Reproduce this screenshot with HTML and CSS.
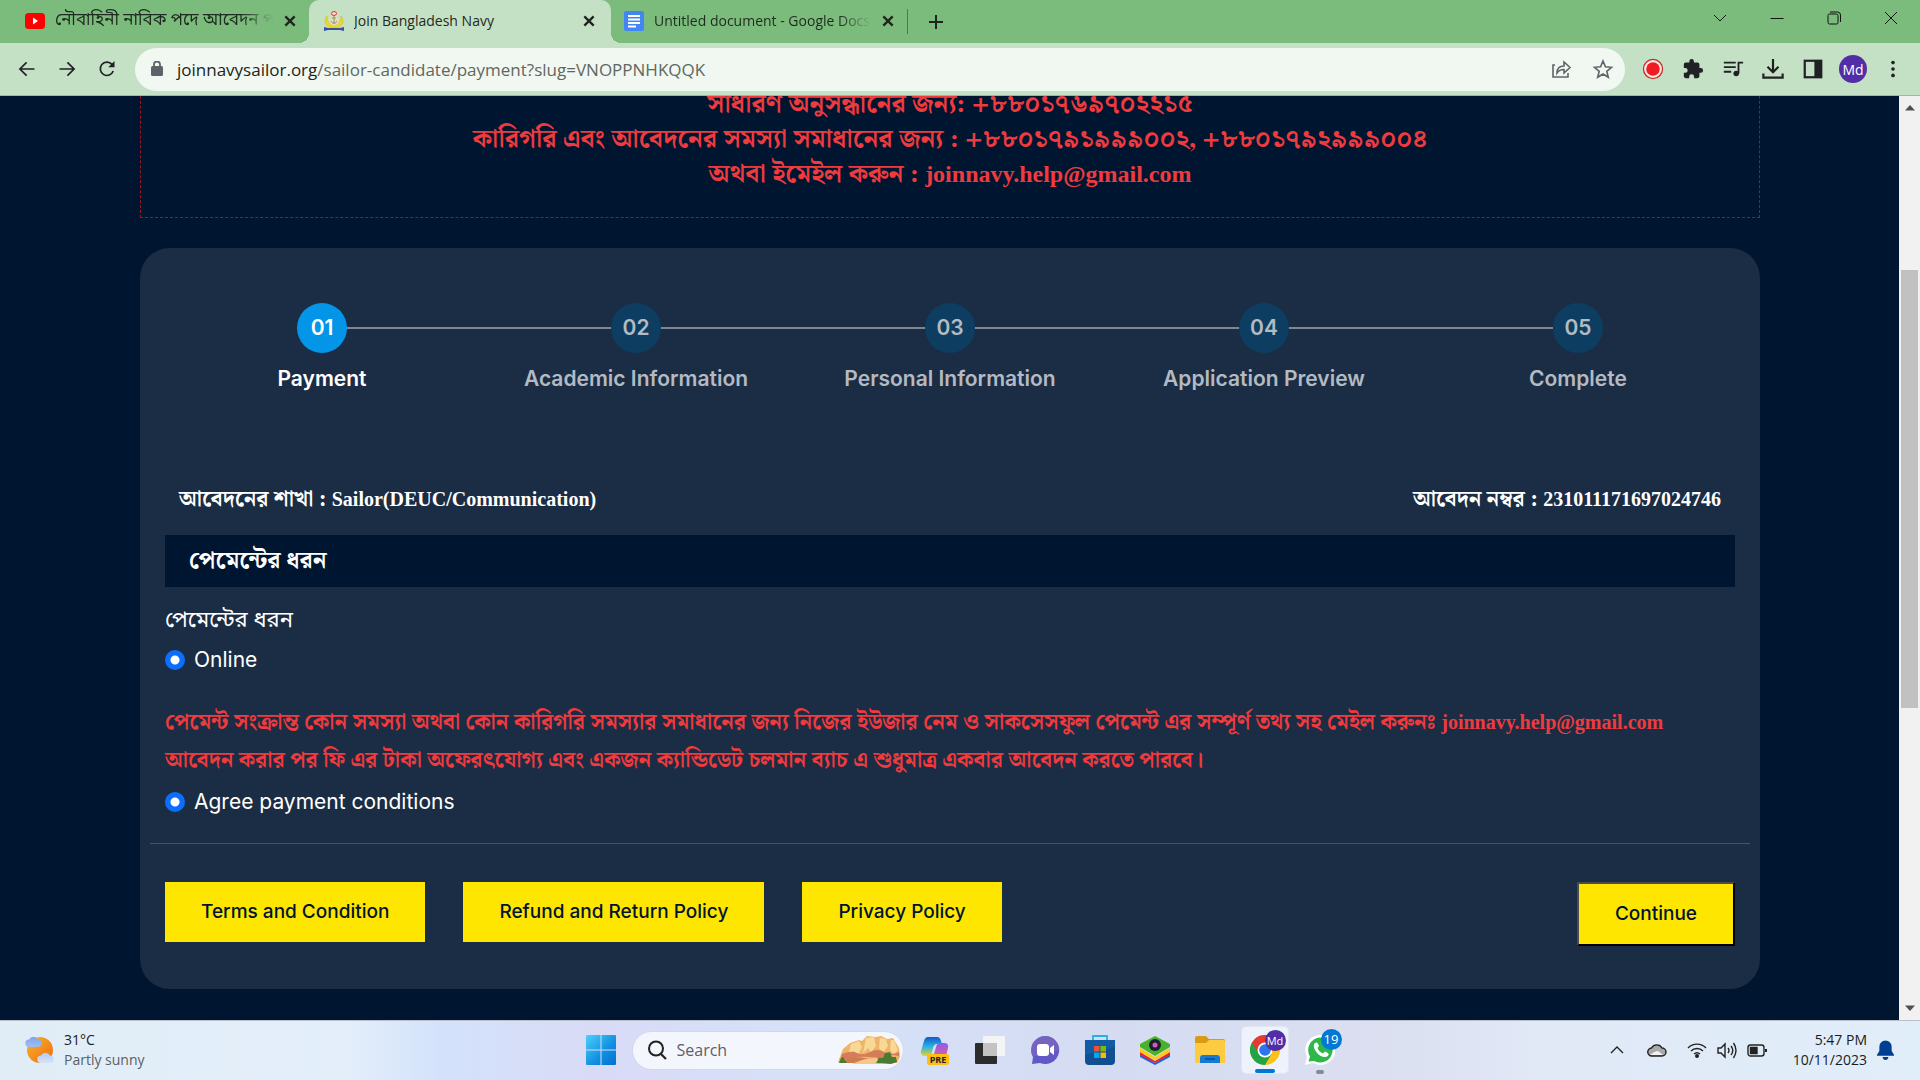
FILE: index.html
```
<!DOCTYPE html>
<html lang="bn">
<head>
<meta charset="utf-8">
<title>Join Bangladesh Navy</title>
<link rel="stylesheet" href="styles.css">
</head>
<body>
<div class="desktop">
  <header class="tabbar">
    <div class="tab">
      <svg class="favicon" viewBox="0 0 20 20"><rect y="2" width="20" height="16" rx="3.500" fill="#f00"/><path d="M8 6.500v7l5-3.500z" fill="#fff"/></svg>
      <span class="tab-title tab-title-bn">নৌবাহিনী নাবিক পদে আবেদন পদ্ধতি</span>
      <button class="tab-close" aria-label="Close tab"><svg viewBox="0 0 12 12"><path d="M2 2l8 8M10 2l-8 8"/></svg></button>
    </div>
    <div class="tab tab-active">
      <svg class="favicon" viewBox="0 0 20 20"><path d="M3 5c-4 5-2 11 7 12 9-1 11-7 7-12 0 5-2 9-7 9s-7-4-7-9z" fill="#ecdc1f" stroke="#c9b51c" stroke-width=".5"/><circle cx="10" cy="9.500" r="5" fill="#e3dfbd"/><path d="M10 5v8M7 10c1 3 5 3 6 0M8 7h4" stroke="#9a9070" fill="none"/><ellipse cx="10" cy="2.500" rx="2.500" ry="2" fill="#f6d9d4" stroke="#e03a2e"/><path d="M0 16l4 1h12l4-1v4l-4-1H4l-4 1z" fill="#3a4fa0"/></svg>
      <span class="tab-title">Join Bangladesh Navy</span>
      <button class="tab-close" aria-label="Close tab"><svg viewBox="0 0 12 12"><path d="M2 2l8 8M10 2l-8 8"/></svg></button>
    </div>
    <div class="tab">
      <svg class="favicon" viewBox="0 0 20 20"><rect width="20" height="20" rx="2" fill="#4285f4"/><path d="M4 5h12M4 8.500h12M4 12h12M4 15.500h8" stroke="#fff" stroke-width="1.800"/></svg>
      <span class="tab-title">Untitled document - Google Docs</span>
      <button class="tab-close" aria-label="Close tab"><svg viewBox="0 0 12 12"><path d="M2 2l8 8M10 2l-8 8"/></svg></button>
    </div>
    <span class="tab-divider"></span>
    <button class="new-tab" aria-label="New tab"><svg viewBox="0 0 16 16"><path d="M8 1v14M1 8h14"/></svg></button>
    <div class="window-buttons">
      <button aria-label="Search tabs"><svg viewBox="0 0 14 14"><path d="M1 4l6 6 6-6"/></svg></button>
      <button aria-label="Minimize"><svg viewBox="0 0 14 14"><path d="M.5 7.500h13"/></svg></button>
      <button aria-label="Restore"><svg viewBox="0 0 14 14"><rect x="1" y="3" width="10" height="10" rx="1.500"/><path d="M3 1h7.500a3 3 0 0 1 3 3v7"/></svg></button>
      <button aria-label="Close"><svg viewBox="0 0 14 14"><path d="M1 1l12 12M13 1L1 13"/></svg></button>
    </div>
  </header>

  <div class="toolbar">
    <div class="nav">
      <button aria-label="Back"><svg viewBox="0 0 24 24"><path d="M21 12H4M11.500 4l-8 8 8 8"/></svg></button>
      <button aria-label="Forward"><svg viewBox="0 0 24 24"><path d="M3 12h17M12.500 4l8 8-8 8"/></svg></button>
      <button aria-label="Reload"><svg viewBox="0 0 24 24"><path d="M19.500 14.500A8 8 0 1 1 18 6.500l2 2.500"/><path d="M21 2.500V10h-7.500z" class="fill"/></svg></button>
    </div>
    <div class="omnibox">
      <svg class="lock" viewBox="0 0 12 16"><rect y="5" width="12" height="10" rx="1.500" fill="#5f6368"/><path d="M3 6V3.500a3 3 0 0 1 6 0V6" fill="none" stroke="#5f6368" stroke-width="1.800"/></svg>
      <span class="url"><span class="host">joinnavysailor.org</span>/sailor-candidate/payment?slug=VNOPPNHKQQK</span>
      <button aria-label="Share"><svg viewBox="0 0 22 20"><path d="M4 6H2v12h15v-4M6 14c0-5 3-7 7-7V3l6 5.500-6 5.500v-3.500c-3 0-5 .5-7 3.500z"/></svg></button>
      <button aria-label="Bookmark"><svg viewBox="0 0 22 20"><path d="M11 2l2.400 5.800 6.100.5-4.700 4 1.500 6-5.300-3.300L5.700 18.300l1.500-6-4.700-4 6.100-.5z"/></svg></button>
    </div>
    <div class="extensions">
      <button aria-label="Recorder"><svg viewBox="0 0 24 24"><circle cx="12" cy="12" r="10.400" fill="#fbe9e0" stroke="#c8292b" stroke-width="1.400"/><circle cx="12" cy="12" r="7.400" fill="#f21b22"/></svg></button>
      <button aria-label="Extensions"><svg viewBox="0 0 24 24"><path fill="#202124" d="M20.500 11H19V7a2 2 0 0 0-2-2h-4V3.500a2.500 2.500 0 0 0-5 0V5H4a2 2 0 0 0-2 2v3.800h1.500a2.700 2.700 0 0 1 0 5.400H2V20a2 2 0 0 0 2 2h3.800v-1.500a2.700 2.700 0 0 1 5.400 0V22H17a2 2 0 0 0 2-2v-4h1.500a2.500 2.500 0 0 0 0-5z"/></svg></button>
      <button aria-label="Media"><svg viewBox="0 0 24 24" fill="none" stroke="#202124" stroke-width="2"><path d="M2 5h13M2 10h13M2 15h8M18 17V5h5"/><circle cx="15.500" cy="17" r="3" fill="#202124" stroke="none"/></svg></button>
      <button aria-label="Downloads"><svg viewBox="0 0 24 24" fill="none" stroke="#202124" stroke-width="2.400"><path d="M12 1v14M6 9.500l6 6 6-6M1.500 17v4.500h21V17"/></svg></button>
      <button aria-label="Side panel"><svg viewBox="0 0 24 24"><rect x="3" y="3" width="18" height="18" fill="none" stroke="#202124" stroke-width="2.400"/><path d="M13.500 3H21v18h-7.500z" fill="#202124"/></svg></button>
      <button class="avatar" aria-label="Profile"><span>Md</span></button>
      <button aria-label="Menu"><svg viewBox="0 0 24 24" fill="#202124"><circle cx="12" cy="5" r="2"/><circle cx="12" cy="12" r="2"/><circle cx="12" cy="19" r="2"/></svg></button>
    </div>
  </div>

  <div class="viewport">
    <main class="page">
      <section class="notice">
        <p>সাধারণ অনুসন্ধানের জন্য: +৮৮০১৭৬৯৭০২২১৫</p>
        <p>কারিগরি এবং আবেদনের সমস্যা সমাধানের জন্য : +৮৮০১৭৯১৯৯৯০০২, +৮৮০১৭৯২৯৯৯০০৪</p>
        <p>অথবা ইমেইল করুন : <span class="latin-lg">joinnavy.help@gmail.com</span></p>
      </section>

      <form class="card">
        <ol class="steps">
          <li class="step step-current"><span class="dot">01</span>Payment</li>
          <li class="step"><span class="dot">02</span>Academic Information</li>
          <li class="step"><span class="dot">03</span>Personal Information</li>
          <li class="step"><span class="dot">04</span>Application Preview</li>
          <li class="step"><span class="dot">05</span>Complete</li>
        </ol>
        <div class="summary">
          <span>আবেদনের শাখা : <span class="latin">Sailor(DEUC/Communication)</span></span>
          <span>আবেদন নম্বর : <span class="latin">231011171697024746</span></span>
        </div>
        <h2 class="section-title">পেমেন্টের ধরন</h2>
        <p class="field-label">পেমেন্টের ধরন</p>
        <div class="choice"><input type="radio" id="online" name="method" checked><label for="online">Online</label></div>
        <div class="warning">
          <p>পেমেন্ট সংক্রান্ত কোন সমস্যা অথবা কোন কারিগরি সমস্যার সমাধানের জন্য নিজের ইউজার নেম ও সাকসেসফুল পেমেন্ট এর সম্পূর্ণ তথ্য সহ মেইল করুনঃ <span class="latin">joinnavy.help@gmail.com</span></p>
          <p>আবেদন করার পর ফি এর টাকা অফেরৎযোগ্য এবং একজন ক্যান্ডিডেট চলমান ব্যাচ এ শুধুমাত্র একবার আবেদন করতে পারবে।</p>
        </div>
        <div class="choice"><input type="radio" id="agree" name="agree" checked><label for="agree">Agree payment conditions</label></div>
        <hr class="rule">
        <div class="actions">
          <a class="btn" href="#terms">Terms and Condition</a>
          <a class="btn" href="#refund">Refund and Return Policy</a>
          <a class="btn" href="#privacy">Privacy Policy</a>
          <button class="btn btn-continue" type="button">Continue</button>
        </div>
      </form>
    </main>
    <div class="scrollbar">
      <svg viewBox="0 0 10 6"><path d="M0 5.500L5 0l5 5.500z"/></svg>
      <div class="track"><div class="thumb"></div></div>
      <svg viewBox="0 0 10 6"><path d="M0 .5L5 6l5-5.500z"/></svg>
    </div>
  </div>

  <footer class="taskbar">
    <div class="weather">
      <svg viewBox="0 0 30 30"><defs><linearGradient id="sun" x2="1" y2="1"><stop stop-color="#f9b52a"/><stop offset="1" stop-color="#ee6a12"/></linearGradient><linearGradient id="cld" x2="0" y2="1"><stop stop-color="#7fa5e8"/><stop offset="1" stop-color="#d5e3fa"/></linearGradient></defs><circle cx="15" cy="15" r="13" fill="url(#sun)"/><path d="M4 12a3.700 3.700 0 0 1 0-7.400 5 5 0 0 1 9 0 3.700 3.700 0 0 1 0 7.400zM16 28a3.700 3.700 0 0 1 0-7.400 5 5 0 0 1 9 0 3.700 3.700 0 0 1 0 7.400z" fill="url(#cld)"/></svg>
      <div><div>31°C</div><div class="muted">Partly sunny</div></div>
    </div>
    <div class="apps">
      <button class="app" aria-label="Start"><svg viewBox="0 0 30 30"><defs><linearGradient id="win" x2="1" y2="1"><stop stop-color="#4cd0fb"/><stop offset=".6" stop-color="#0f8ee0"/><stop offset="1" stop-color="#0470d0"/></linearGradient></defs><path d="M0 1a1 1 0 0 1 1-1h13.500v14.500H0zM15.500 0H29a1 1 0 0 1 1 1v13.500H15.500zM0 15.500h14.500V30H1a1 1 0 0 1-1-1zM15.500 15.500H30V29a1 1 0 0 1-1 1H15.500z" fill="url(#win)"/></svg></button>
      <label class="search">
        <svg class="glass" viewBox="0 0 20 20"><circle cx="9" cy="8.500" r="7" fill="none" stroke="#222" stroke-width="2"/><path d="M14 14l5 5" stroke="#222" stroke-width="2.200"/></svg>
        <input type="text" placeholder="Search" aria-label="Search">
        <svg class="hills" viewBox="0 0 62 30"><path d="M0 27l5-13 7-6 9-3 3 1 5-5 9 1 5-1 6 3 6-1 6 10 1 9-3 6H2z" fill="#eeb568"/><path d="M13 9l8-3 3 6-4 8-5-4-5 6zM28 3l8-1 2 9-5 6-3-4-5 5zM42 3l6 1 2 7-5 7-4-5zM53 5l3 0 4 10-4 5-4-5z" fill="#f8d894"/><path d="M4 19q10-4 15-1t13-1 14 0 15 0v4q-10-2-15 0t-15 1-14 1-14 1z" fill="#d57c5a"/><path d="M6 25q12-4 20-2t17-2l14 3-2 4H3z" fill="#cf7b50"/><path d="M14 29q14-7 25-6l4 6z" fill="#f6c98a"/><path d="M1 28l2-5 2-1 4 6zM38 28l3-5 4 0 2-5 5-1 2 5 4 0 1 5-6 2z" fill="#4b7a35"/></svg>
      </label>
      <button class="app" aria-label="Copilot"><svg viewBox="0 0 30 30"><defs><linearGradient id="cpa" x2="0" y2="1"><stop stop-color="#1559c9"/><stop offset=".5" stop-color="#27b1e6"/><stop offset="1" stop-color="#e5d629"/></linearGradient><linearGradient id="cpb" x2="0" y2="1"><stop stop-color="#8d5bf0"/><stop offset="1" stop-color="#f2618a"/></linearGradient></defs><path d="M8 2h9q3 0 4 4l1 3h-5q-3 0-4 4l-2 8H5q-5 0-4-5L4 6q1-4 4-4z" fill="url(#cpa)"/><path d="M20 8h4q5 0 4 5l-2 8q-1 4-5 4h-9q-3 0-3-3 4 1 5-3l2-7q1-4 4-4z" fill="url(#cpb)"/><rect x="7" y="19" width="22" height="11" rx="2" fill="#fdbf13"/><text x="18" y="28" text-anchor="middle" class="pre">PRE</text></svg></button>
      <button class="app" aria-label="Task view"><svg viewBox="0 0 30 30"><rect y="8" width="22" height="21" rx="1" fill="#2c2c2c"/><rect x="8" y="1" width="22" height="20" rx="1" fill="#f5f5f5" opacity=".92"/><path d="M8 8h14v13H8z" fill="#c3c3c3"/></svg></button>
      <button class="app" aria-label="Chat"><svg viewBox="0 0 30 30"><path d="M15 1a14 14 0 1 1-5 27l-8 1 1-7A14 14 0 0 1 15 1z" fill="#6259c6"/><path d="M15 1a14 14 0 0 1 14 14L3 22A14 14 0 0 1 15 1z" fill="#7c68bd" opacity=".7"/><rect x="7" y="9" width="12" height="12" rx="3" fill="#fff"/><path d="M20 13l4-3v10l-4-3z" fill="#fff"/></svg></button>
      <button class="app" aria-label="Store"><svg viewBox="0 0 30 30"><path d="M8 6V1h14v5" fill="none" stroke="#22b1ea" stroke-width="1.800"/><path d="M0 5h30v21a4 4 0 0 1-4 4H4a4 4 0 0 1-4-4z" fill="#124f91"/><path d="M0 5h30v7L0 20z" fill="#1262ae" opacity=".7"/><path d="M9 11h5.500v5.500H9z" fill="#f1502f"/><path d="M15.500 11H21v5.500h-5.500z" fill="#80bb03"/><path d="M9 17.500h5.500V23H9z" fill="#05a7f0"/><path d="M15.500 17.500H21V23h-5.500z" fill="#fcba05"/></svg></button>
      <button class="app" aria-label="Emulator"><svg viewBox="0 0 30 30"><path d="M0 19l15 9 15-9v3l-15 8-15-8z" fill="#1a63d8"/><path d="M0 17l15 9 15-9v3l-15 8-15-8z" fill="#e5262b"/><path d="M0 13l15 9 15-9v4l-15 8-15-8z" fill="#ffc914"/><path d="M0 9L15 1l15 8v3l-15 9L0 12z" fill="#47b32d"/><circle cx="15" cy="10" r="6" fill="#1c2030"/><circle cx="15" cy="10" r="2.500" fill="#d05ac0"/></svg></button>
      <button class="app" aria-label="File Explorer"><svg viewBox="0 0 30 30"><path d="M0 3q0-2 2-2h9l3 3h14q2 0 2 2v8H0z" fill="#d99a16"/><path d="M0 8h11l3-3h14q2 0 2 2v21H0z" fill="#fccb3f"/><path d="M5 28v-5q0-3 3-3h14q3 0 3 3v5z" fill="#137bd3"/><path d="M10 24h10" stroke="#0a4c92" stroke-width="1.500"/></svg></button>
      <button class="app app-active" aria-label="Chrome"><svg viewBox="0 0 30 30"><circle cx="15" cy="15" r="15" fill="#fbc116"/><path d="M15 15L2 7.500A15 15 0 0 0 15 30l6.500-11z" fill="#23a347"/><path d="M2 7.500A15 15 0 0 1 28 7.500H15l-6.500 11z" fill="#e53a2e"/><circle cx="15" cy="15" r="7.500" fill="#fff"/><circle cx="15" cy="15" r="5.800" fill="#2e74ec"/></svg><span class="badge badge-md">Md</span></button>
      <button class="app app-open" aria-label="WhatsApp"><svg viewBox="0 0 30 30"><path d="M15 0a15 15 0 1 1-7 28l-8 2 2-8A15 15 0 0 1 15 0z" fill="#fff"/><path d="M15 2.500a12.500 12.500 0 1 1-6 23.400L3.500 26.500 5 21.500A12.500 12.500 0 0 1 15 2.500z" fill="#2eb84a"/><path d="M10 8c-4 3 3 15 11 14 3-1 3-3 2-4l-3-1.500-2 2q-4-1.500-5.500-5.500l1.500-2L12.500 8q-1-1-2.500 0z" fill="#fff"/></svg><span class="badge">19</span></button>
    </div>
    <div class="tray">
      <svg viewBox="0 0 20 20"><path d="M4 13l6-6 6 6"/></svg>
      <svg viewBox="0 0 20 20"><path d="M5 16a4 4 0 0 1-.5-8A6 6 0 0 1 15 8a4 4 0 0 1 0 8z" fill="#a9a9a9"/><path d="M3 15q5-4 8-4l5 4z" fill="#f2f2f2" stroke="none"/></svg>
      <svg viewBox="0 0 20 20"><path d="M1 8a12.500 12.500 0 0 1 18 0M4 11a8.500 8.500 0 0 1 12 0M7 14a4.500 4.500 0 0 1 6 0"/><circle cx="10" cy="16" r="1.300" fill="#222"/></svg>
      <svg viewBox="0 0 20 20"><path d="M1 8v5h3l4 4V4L4 8zM11 8q2 2.500 0 5M14 6q3.500 4.500 0 9M16.500 3q5 7.500 0 15"/></svg>
      <svg viewBox="0 0 20 20"><rect x="1" y="5" width="16" height="11" rx="2.500"/><path d="M3.500 7.500H10v6H3.500z" fill="#222"/><path d="M19 9v3" stroke-width="2"/></svg>
      <div class="clock"><div>5:47 PM</div><div>10/11/2023</div></div>
      <svg class="bell" viewBox="0 0 18 20"><path d="M9 0a6.500 6.500 0 0 1 6.500 6.500V11L18 15v1H0v-1l2.500-4V6.500A6.500 6.500 0 0 1 9 0zM6 17.500h6a3 3 0 0 1-6 0z"/></svg>
    </div>
  </footer>
</div>
</body>
</html>
```
FILE: styles.css
```
* { box-sizing: border-box; }
body { margin: 0; font-family: "Open Sans", "Noto Sans", sans-serif; }
p, h2, ol { margin: 0; padding: 0; }
button { border: 0; padding: 0; background: none; font: inherit; color: inherit; }

.desktop { display: flex; flex-direction: column; height: 100vh; overflow: hidden; }

/* Browser tabs */
.tabbar { display: flex; align-items: center; height: 43px; background: #7bbc7c; flex: none; }
.tab { display: flex; align-items: center; width: 302px; height: 43px; padding: 0 15px 2px; gap: 10px; }
.tab:first-child { width: 309px; padding: 0 12px 2px 25px; }
.tab:nth-child(3) { width: 296px; padding: 0 12px 2px 13px; }
.tab-active { position: relative; background: #c5e1c5; border-radius: 10px 10px 0 0; }
.tab-active::before, .tab-active::after { content: ""; position: absolute; bottom: 0; width: 10px; height: 10px; }
.tab-active::before { left: -10px; background: radial-gradient(circle at 0 0, transparent 10px, #c5e1c5 10px); }
.tab-active::after { right: -10px; background: radial-gradient(circle at 100% 0, transparent 10px, #c5e1c5 10px); }
.favicon { width: 20px; height: 20px; flex: none; }
.tab-title { flex: 1; overflow: hidden; white-space: nowrap; font-size: 14px; line-height: 36px; color: #1f2a20; }
.tab:not(.tab-active) .tab-title { -webkit-mask-image: linear-gradient(90deg, #000 85%, transparent); mask-image: linear-gradient(90deg, #000 85%, transparent); }
.tab-title-bn { font-family: "Noto Sans Bengali", sans-serif; font-size: 17px; }
.tab-close, .tab-close svg { width: 14px; height: 14px; display: block; }
.tab-close svg, .new-tab svg { fill: none; stroke: #202421; stroke-width: 2; }
.tab-divider { width: 1px; height: 25px; background: #4d784e; }
.new-tab { width: 56px; display: grid; place-items: center; }
.new-tab svg { width: 16px; height: 16px; }
.window-buttons { display: flex; margin-left: auto; padding: 0 1px 7px 0; }
.window-buttons button { width: 57px; display: grid; place-items: center; }
.window-buttons svg { width: 14px; height: 14px; fill: none; stroke: #111; }

/* Address bar */
.toolbar { display: flex; align-items: center; gap: 8px; height: 53px; padding: 0 7px 0 7px; background: #c5e1c5; border-bottom: 1px solid #9db89e; flex: none; }
.nav, .extensions { display: flex; }
.nav button, .extensions button { width: 40px; height: 40px; display: grid; place-items: center; }
.nav svg { width: 20px; height: 20px; fill: none; stroke: #202124; stroke-width: 2; }
.nav .fill { fill: #202124; stroke: none; }
.extensions svg { width: 22px; height: 22px; }
.omnibox { flex: 1; display: flex; align-items: center; height: 43px; padding: 0 13px 0 16px; background: #f1f8f1; border-radius: 22px; }
.lock { width: 12px; height: 16px; margin-right: 14px; }
.url { flex: 1; font-size: 17px; color: #5f6761; }
.host { color: #1d2420; }
.omnibox button { width: 40px; display: grid; place-items: center; }
.omnibox button + button { width: 20px; margin-left: 10px; }
.omnibox button svg { width: 22px; height: 20px; fill: none; stroke: #5f6368; stroke-width: 1.6; }
.extensions .avatar span { display: grid; place-items: center; width: 28px; height: 28px; border-radius: 50%; background: #512da8; color: #fff; font-size: 14px; }

/* Web page */
.viewport { flex: 1; display: flex; min-height: 0; overflow: hidden; }
.page { flex: 1; padding: 0 139px 0 140px; background: #001530; overflow: hidden; }
.notice { margin-top: -40px; padding: 30px 0 25px; border: 1px dashed #a3121f; text-align: center; color: #ef3a3e; font: 700 26px/35px FreeSerif, "Noto Serif Bengali", serif; white-space: nowrap; }
.latin, .latin-lg { font-family: "Liberation Serif", serif; font-size: 20px; line-height: 24px; }
.latin-lg { font-size: 24px; }
.card { margin-top: 30px; padding: 55px 25px 43px; border-radius: 30px; background: #1b2d44; color: #fff; font: 400 21px/30px Inter, sans-serif; }

.steps { display: grid; grid-template-columns: repeat(5, 1fr); list-style: none; font-weight: 600; }
.step { position: relative; display: flex; flex-direction: column; align-items: center; gap: 11px; color: #b3bac2; }
.step + .step::before { content: ""; position: absolute; top: 24px; right: 50%; width: 100%; height: 2px; padding: 0 25px; background: #7c888d; background-clip: content-box; }
.dot { position: relative; z-index: 1; display: grid; place-items: center; width: 50px; height: 50px; border-radius: 50%; background: #0d3e61; }
.step-current { color: #fff; }
.step-current .dot { background: #0295e8; }

.summary { display: flex; justify-content: space-between; margin-top: 87px; padding: 0 14px; font: 700 22px/36px FreeSerif, "Noto Serif Bengali", serif; }
.section-title { margin-top: 18px; padding: 0 24px; background: #001530; font: 700 24px/52px FreeSerif, "Noto Serif Bengali", serif; }
.field-label { margin-top: 20px; font: 400 22px/30px "Noto Sans Bengali", sans-serif; }
.choice { display: flex; align-items: center; gap: 9px; margin-top: 8px; }
.choice input { appearance: none; width: 20px; height: 20px; margin: 0; border-radius: 50%; background: radial-gradient(circle, #fff 4px, #0d6efd 5px); }
.warning { margin-top: 28px; color: #ef3a3e; font: 700 22px/38px FreeSerif, "Noto Serif Bengali", serif; }
.rule { height: 1px; margin: 26px -15px 38px; border: 0; background: #44556a; }
.actions { display: flex; align-items: flex-start; gap: 38px; }
.btn { padding: 0 36px; background: #ffe600; color: #001530; font: 500 19px/60px Inter, sans-serif; text-decoration: none; }
.btn-continue { margin-left: auto; border: 2px solid; border-color: #4c4c4c #000 #000 #4c4c4c; }

.scrollbar { display: flex; flex-direction: column; align-items: center; width: 21px; padding: 9px 2px; background: #f1f1f1; }
.scrollbar svg { width: 10px; height: 6px; fill: #505050; flex: none; }
.track { flex: 1; align-self: stretch; padding: 159px 0 0; }
.thumb { height: 59%; min-height: 438px; background: #c1c1c1; }

/* Taskbar */
.taskbar { display: grid; grid-template-columns: 1fr auto 1fr; align-items: center; height: 60px; flex: none; padding-bottom: 1px; border-top: 1px solid #b9c0cc; background: linear-gradient(90deg, #e0edf6, #e3eefa 18%, #d3e2fb 23%, #d9dbf6 31%, #d6e1f8 42%, #d5dcf2 58%, #dbdff0 72%, #e1e8f6 80%, #e0eefa); font-size: 14px; line-height: 20px; color: #1b1b1b; }
.weather { display: flex; align-items: center; gap: 9px; padding-left: 25px; }
.weather svg { width: 30px; height: 30px; }
.muted { color: #5a5f66; }
.apps { display: flex; align-items: center; gap: 7px; }
.app { position: relative; display: grid; place-items: center; width: 48px; height: 48px; border-radius: 5px; }
.app svg { width: 30px; height: 30px; }
.app-active { background: #eef2fc; border: 1px solid #e2e6f2; }
.app-active::after, .app-open::after { content: ""; position: absolute; bottom: 0; width: 20px; height: 4px; border-radius: 2px; background: #0078d4; }
.app-open::after { width: 8px; background: #84899a; }
.badge { position: absolute; top: 3px; right: 2px; width: 21px; height: 21px; border-radius: 50%; background: #0078d4; color: #fff; font-size: 13px; line-height: 21px; text-align: center; }
.badge-md { background: #512da8; font-size: 11px; }
.pre { font: 700 9px "Open Sans", sans-serif; fill: #222; }
.search { display: flex; align-items: center; width: 272px; height: 39px; padding: 0 3px 0 14px; border-radius: 20px; background: #f4f6fd; border: 1px solid #d3d8e8; }
.glass { width: 20px; height: 20px; flex: none; }
.search input { flex: 1; min-width: 0; margin-left: 8px; border: 0; background: none; font: 400 16px/24px "Open Sans", sans-serif; }
.search input::placeholder { color: #5c5f66; }
.hills { width: 62px; height: 30px; flex: none; }
.tray { display: flex; align-items: center; justify-content: flex-end; gap: 10px; padding-right: 26px; }
.tray svg { width: 20px; height: 20px; fill: none; stroke: #222; stroke-width: 1.400; }
.tray svg:nth-child(-n+2) { margin-right: 10px; }
.clock { margin-left: 16px; text-align: right; }
.tray .bell { width: 17px; fill: #003e92; stroke: none; }
```
